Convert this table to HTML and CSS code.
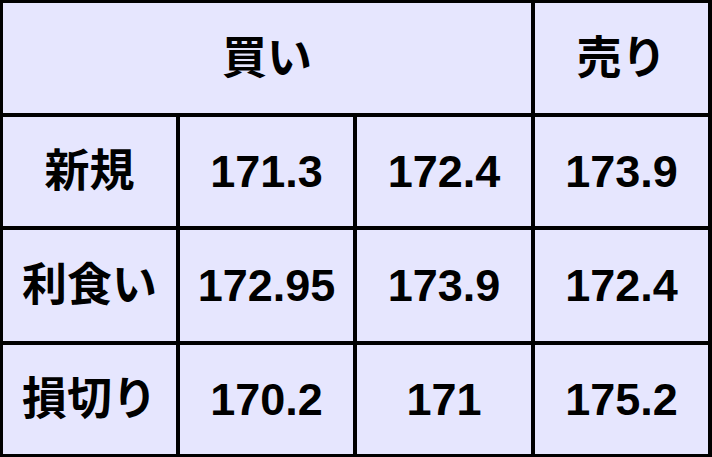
FILE: index.html
```html
<!DOCTYPE html>
<html lang="ja">
<head>
<meta charset="utf-8">
<title>価格表</title>
<link rel="stylesheet" href="styles.css">
</head>
<body>
<div class="table">
  <div class="cell span3">買い</div>
  <div class="cell">売り</div>

  <div class="cell">新規</div>
  <div class="cell">171.3</div>
  <div class="cell">172.4</div>
  <div class="cell">173.9</div>

  <div class="cell">利食い</div>
  <div class="cell">172.95</div>
  <div class="cell">173.9</div>
  <div class="cell">172.4</div>

  <div class="cell">損切り</div>
  <div class="cell">170.2</div>
  <div class="cell">171</div>
  <div class="cell">175.2</div>
</div>
</body>
</html>
```

FILE: styles.css
```css
html, body {
  margin: 0;
  padding: 0;
  background: #ffffff;
}

.table {
  box-sizing: border-box;
  width: 712px;
  height: 457px;
  background: #000000;
  padding: 3px 4px 3px 3px;
  display: grid;
  grid-template-columns: 173px 173px 174px 173px;
  grid-template-rows: 110px 109px 111px 109px;
  gap: 4px;
  font-family: "Liberation Sans", "Noto Sans CJK JP", sans-serif;
  font-weight: bold;
  font-size: 45px;
  color: #000000;
}

.cell {
  background: #e6e6fe;
  display: flex;
  align-items: center;
  justify-content: center;
  line-height: 1;
}

.span3 {
  grid-column: 1 / span 3;
}
```
